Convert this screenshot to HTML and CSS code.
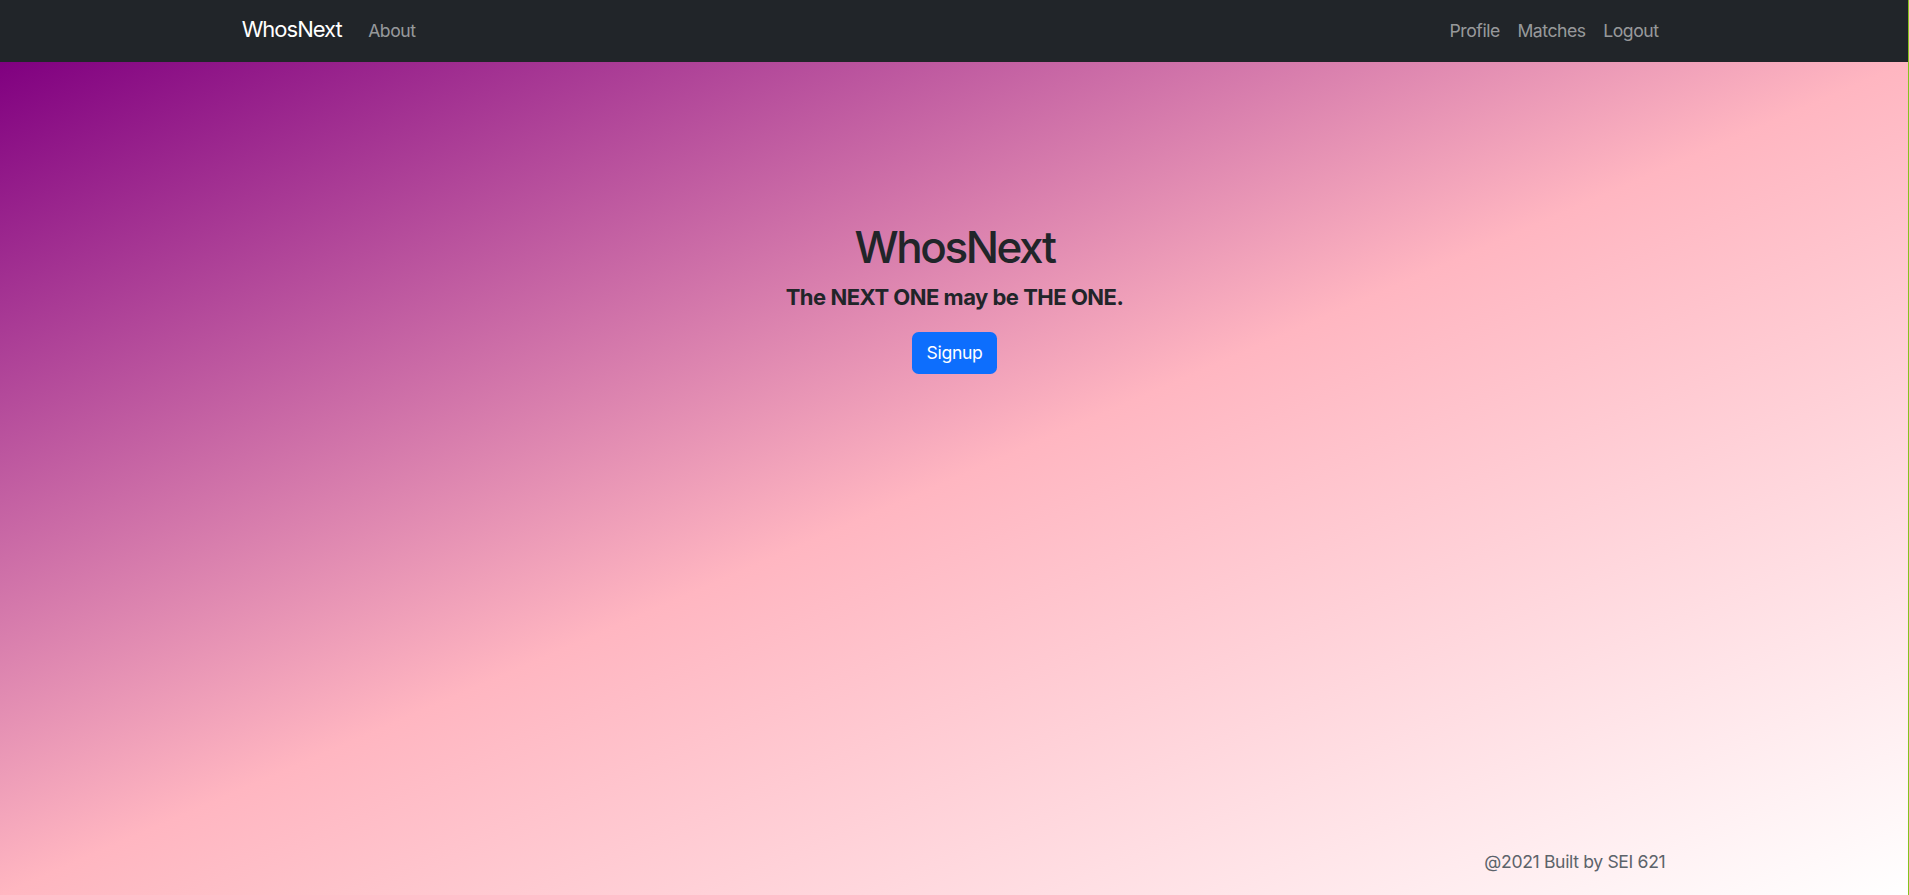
FILE: index.html
```html
<!DOCTYPE html>
<html lang="en">
<head>
<meta charset="utf-8">
<title>WhosNext</title>
<link rel="stylesheet" href="styles.css">
</head>
<body>
<nav class="navbar">
  <div class="container nav-inner">
    <div class="nav-left">
      <a class="brand" href="#">WhosNext</a>
      <a class="nav-link" href="#">About</a>
    </div>
    <div class="nav-right">
      <a class="nav-link" href="#">Profile</a>
      <a class="nav-link" href="#">Matches</a>
      <a class="nav-link" href="#">Logout</a>
    </div>
  </div>
</nav>
<div class="page">
  <main class="hero">
    <h1 class="hero-title">WhosNext</h1>
    <h5 class="hero-sub">The NEXT ONE may be THE ONE.</h5>
    <a class="btn-primary" href="#">Signup</a>
  </main>
  <footer class="container footer">
    <span class="footer-text">@2021 Built by SEI 621</span>
  </footer>
</div>
<div class="edge"></div>
</body>
</html>
```
FILE: styles.css
```css
* { box-sizing: border-box; }
html, body { height: 100%; }
body {
  margin: 0;
  font-family: Inter, "Liberation Sans", Arial, sans-serif;
  color: #212529;
  display: flex;
  flex-direction: column;
  overflow: hidden;
}
a { text-decoration: none; }
.container {
  width: 1452px;
  margin: 0 auto;
  padding: 0 13.2px;
}
.navbar {
  background: #212529;
  height: 62px;
  flex: none;
}
.nav-inner {
  height: 100%;
  display: flex;
  align-items: center;
  justify-content: space-between;
}
.nav-left, .nav-right {
  display: flex;
  align-items: baseline;
}
.nav-left { margin-bottom: 3.4px; }
.brand {
  color: #fff;
  font-size: 22px;
  line-height: 33px;
  letter-spacing: -1px;
  margin-right: 17.6px;
}
.nav-link {
  color: rgba(255,255,255,.55);
  font-size: 17.6px;
  line-height: 26.4px;
  letter-spacing: -0.45px;
  padding: 0 8.8px;
}
.page {
  flex: 1;
  display: flex;
  flex-direction: column;
  background: linear-gradient(to bottom right, #800080, #ffb6c1, #ffffff);
}
.hero {
  flex: 1;
  display: flex;
  flex-direction: column;
  align-items: center;
  padding-top: 159px;
}
.hero-title {
  margin: 0 0 10.7px;
  font-size: 44px;
  line-height: 52.8px;
  font-weight: 500;
  letter-spacing: -2.4px;
}
.hero-sub {
  margin: 0 0 20.8px;
  font-size: 22px;
  line-height: 26.4px;
  font-weight: 700;
  letter-spacing: -0.5px;
}
.btn-primary {
  background: #0d6efd;
  color: #fff;
  font-size: 17.6px;
  line-height: 26.4px;
  letter-spacing: -0.3px;
  padding: 7.9px 14px;
  border-radius: 6.6px;
}
.footer {
  display: flex;
  justify-content: flex-end;
  padding-bottom: 20px;
}
.footer-text {
  color: #5c636a;
  font-size: 17.6px;
  line-height: 26.4px;
  letter-spacing: -0.35px;
  padding-right: 2px;
}
.edge {
  position: fixed;
  top: 0;
  right: 0;
  width: 1px;
  height: 100%;
  background: #86c21c;
}
```
